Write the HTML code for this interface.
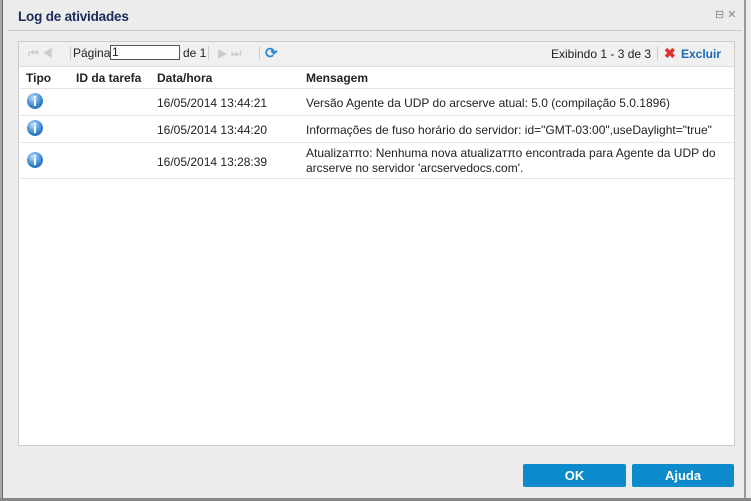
<!DOCTYPE html>
<html><head><meta charset="utf-8"><style>
body{margin:0;width:751px;height:501px;overflow:hidden;background:#ececec;font-family:"Liberation Sans",Arial,sans-serif;font-size:12px;color:#222;position:relative}
.abs{position:absolute}
.info{position:absolute;width:16px;height:16px;border-radius:50%;background:radial-gradient(circle at 40% 30%,#bfe0ff,#3a86d0 55%,#1b5aa0);}
.info:after{content:"";position:absolute;left:7px;top:6px;width:2px;height:7px;background:#fff}
.info:before{content:"";position:absolute;left:7px;top:3px;width:2px;height:2px;background:#fff}
.row{position:absolute;left:20px;width:714px;border-bottom:1px solid #e4e4e4}
.btn{position:absolute;top:464px;height:23px;background:#0b8bcb;color:#fff;font-weight:bold;text-align:center;line-height:23px;border-radius:2px;font-size:13px}
</style></head><body>
<div class="abs" style="left:0;top:0;width:2px;height:501px;background:#aaa"></div>
<div class="abs" style="left:2px;top:0;width:1px;height:501px;background:#666"></div>
<div class="abs" style="left:744px;top:0;width:2px;height:501px;background:#999"></div>
<div class="abs" style="left:0;top:498px;width:751px;height:3px;background:#888"></div>
<div class="abs" style="left:18px;top:9px;font-size:13.5px;font-weight:bold;color:#1a2a5a;letter-spacing:-0.2px">Log de atividades</div>
<div class="abs" style="left:715px;top:8px;color:#888;font-size:11px">⊟ ✕</div>
<div class="abs" style="left:8px;top:30px;width:734px;height:1px;background:#ccc"></div>
<div class="abs" style="left:18px;top:41px;width:717px;height:405px;background:#fff;border:1px solid #ccc;box-sizing:border-box"></div>
<div class="abs" style="left:19px;top:42px;width:715px;height:24px;background:#f0f0f0;border-bottom:1px solid #ddd"></div>
<div class="abs" style="left:28px;top:46px;color:#ccc;font-size:12px">⏮ ◀</div>
<div class="abs" style="left:70px;top:46px;width:1px;height:14px;background:#ccc"></div>
<div class="abs" style="left:73px;top:46px">Página</div>
<div class="abs" style="left:110px;top:45px;width:70px;height:15px;border:1px solid #555;background:#fff;box-sizing:border-box;line-height:13px;padding-left:1px">1</div>
<div class="abs" style="left:183px;top:46px">de 1</div>
<div class="abs" style="left:208px;top:46px;width:1px;height:14px;background:#ccc"></div>
<div class="abs" style="left:218px;top:46px;color:#ccc">▶ ⏭</div>
<div class="abs" style="left:259px;top:46px;width:1px;height:14px;background:#ccc"></div>
<div class="abs" style="left:265px;top:44px;color:#2a8ad8;font-size:15px;font-weight:bold">⟳</div>
<div class="abs" style="left:551px;top:47px">Exibindo 1 - 3 de 3</div>
<div class="abs" style="left:657px;top:46px;width:1px;height:14px;background:#ccc"></div>
<div class="abs" style="left:664px;top:45px;color:#d33;font-weight:bold;font-size:14px">✖</div>
<div class="abs" style="left:681px;top:47px;color:#1a6ab8;font-weight:bold">Excluir</div>
<div class="row" style="top:66px;height:22px;font-weight:bold">
<span class="abs" style="left:6px;top:5px">Tipo</span><span class="abs" style="left:56px;top:5px">ID da tarefa</span><span class="abs" style="left:137px;top:5px">Data/hora</span><span class="abs" style="left:286px;top:5px">Mensagem</span></div>
<div class="row" style="top:89px;height:26px"><div class="info" style="left:7px;top:4px"></div><span class="abs" style="left:137px;top:7px">16/05/2014 13:44:21</span><span class="abs" style="left:286px;top:7px">Versão Agente da UDP do arcserve atual: 5.0 (compilação 5.0.1896)</span></div>
<div class="row" style="top:116px;height:26px"><div class="info" style="left:7px;top:4px"></div><span class="abs" style="left:137px;top:7px">16/05/2014 13:44:20</span><span class="abs" style="left:286px;top:7px">Informações de fuso horário do servidor: id="GMT-03:00",useDaylight="true"</span></div>
<div class="row" style="top:143px;height:35px"><div class="info" style="left:7px;top:9px"></div><span class="abs" style="left:137px;top:12px">16/05/2014 13:28:39</span><span class="abs" style="left:286px;top:3px;line-height:15px">Atualizaтπо: Nenhuma nova atualizaтπо encontrada para Agente da UDP do<br>arcserve no servidor 'arcservedocs.com'.</span></div>
<div class="btn" style="left:523px;width:103px">OK</div>
<div class="btn" style="left:632px;width:102px">Ajuda</div>
</body></html>
